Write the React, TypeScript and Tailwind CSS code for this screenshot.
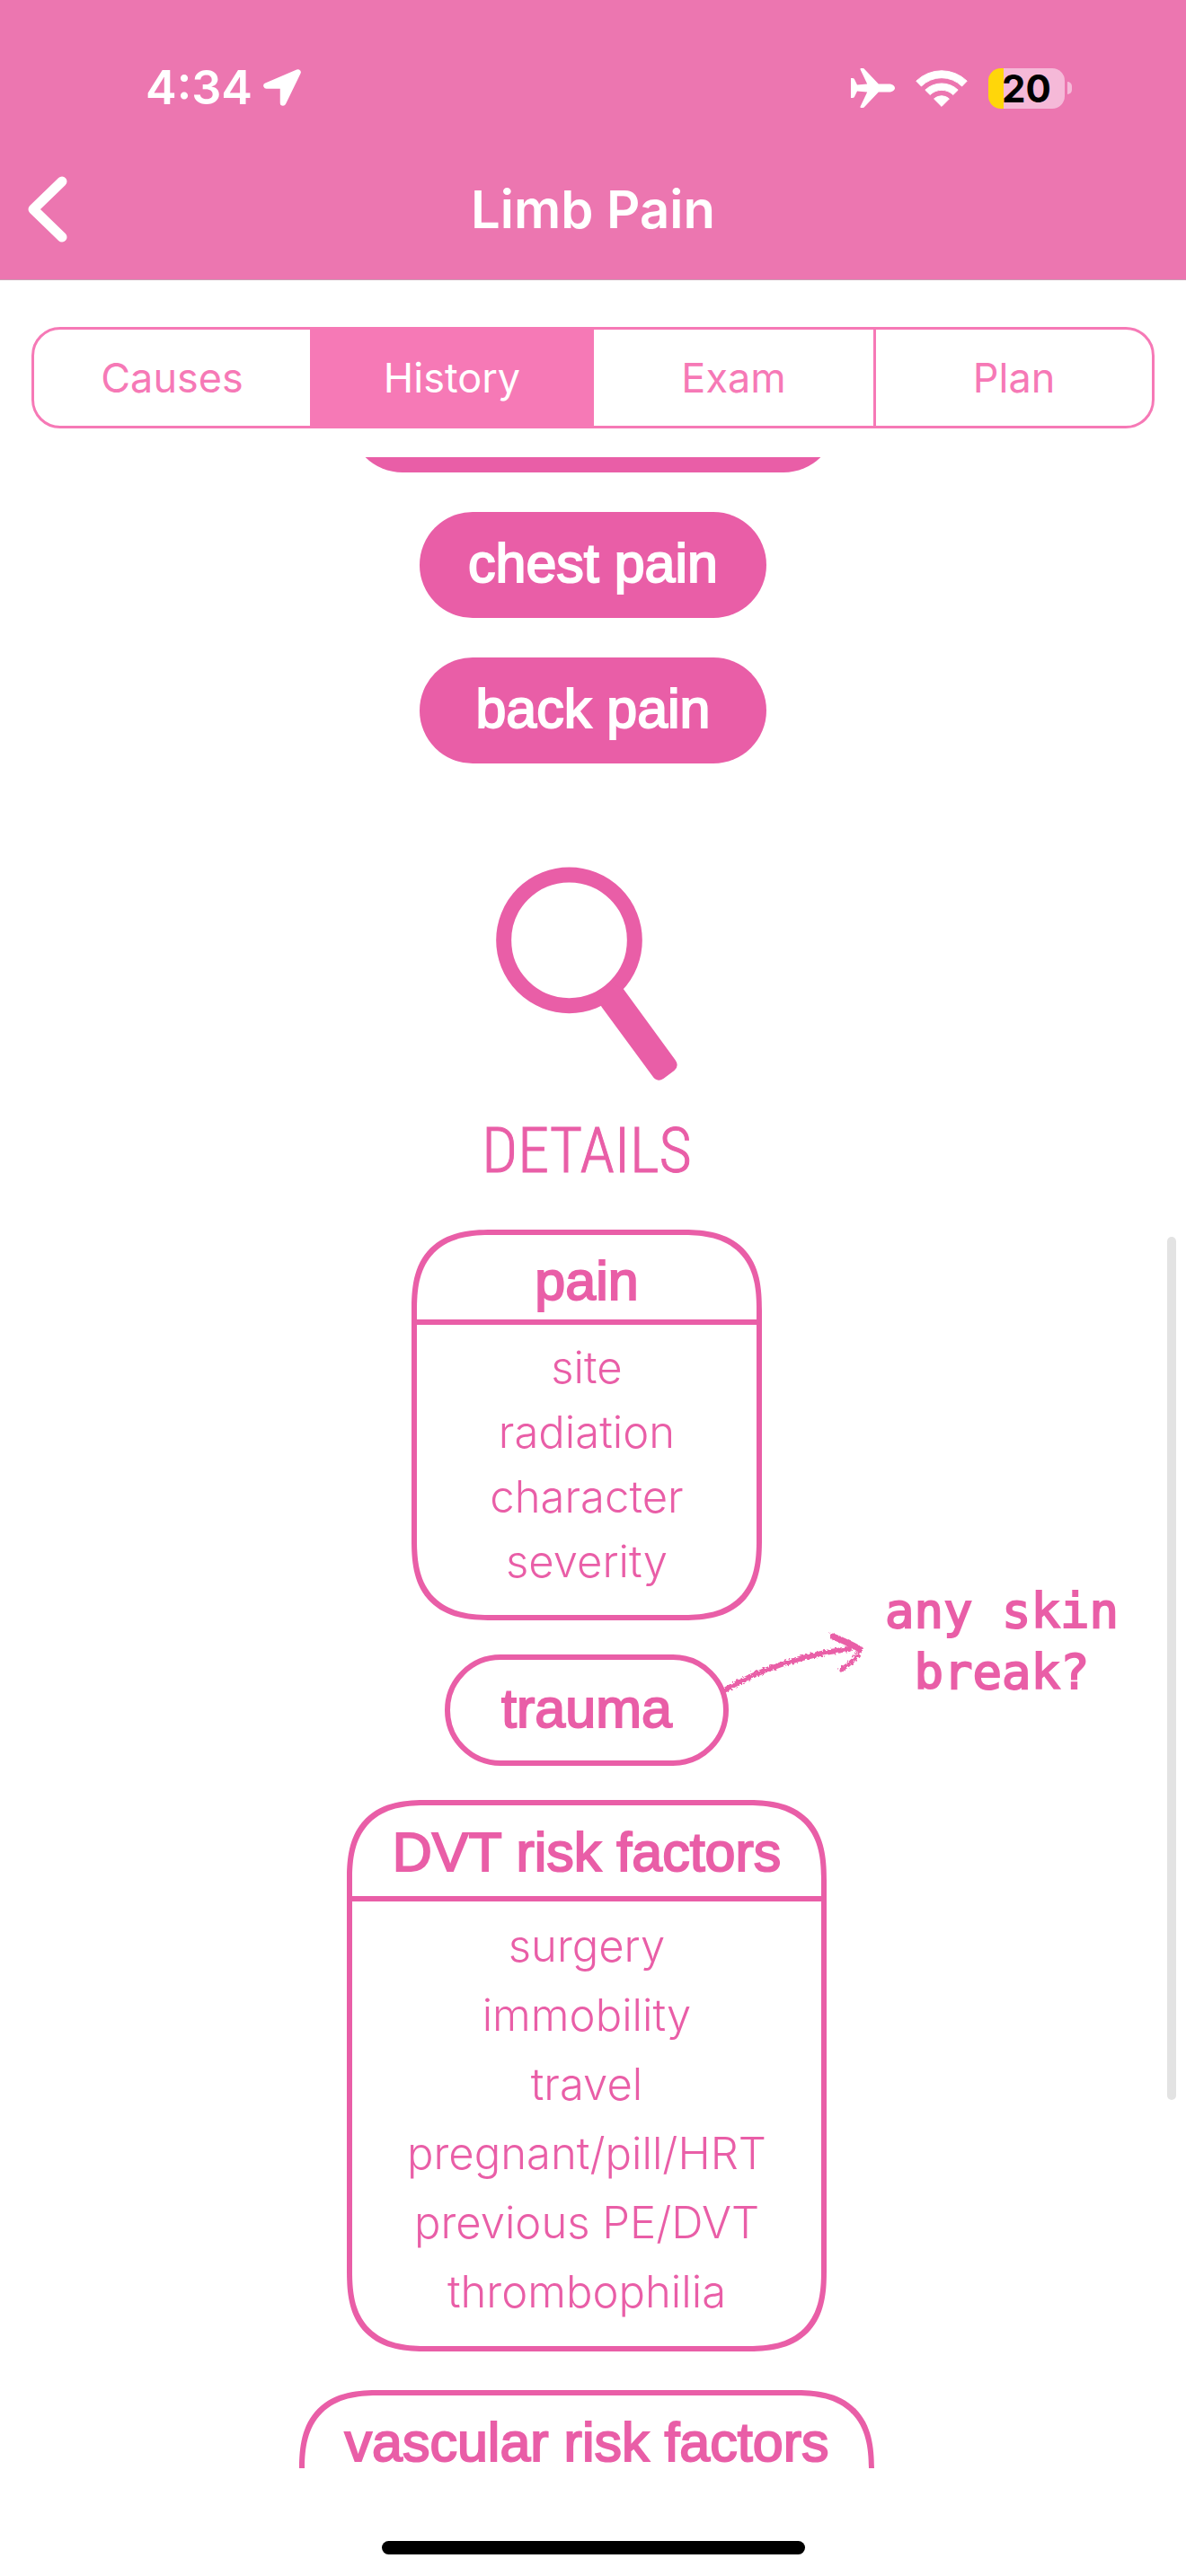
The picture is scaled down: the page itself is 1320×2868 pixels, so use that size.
import React, { useState } from "react";

const TABS = ["Causes", "History", "Exam", "Plan"];
const PAIN = ["site", "radiation", "character", "severity"];
const DVT = ["surgery", "immobility", "travel", "pregnant/pill/HRT", "previous PE/DVT", "thrombophilia"];

function LocationIcon() {
  return (
    <svg viewBox="0 0 42 42" className="h-[42px] w-[42px]" aria-hidden="true">
      <path d="M38.5 3.5 3.5 18.5H22v19z" fill="white" stroke="white" strokeWidth="6.5" strokeLinejoin="round" />
    </svg>
  );
}

function PlaneIcon() {
  return (
    <svg viewBox="0 0 49 44" className="h-11 w-[49px]" aria-hidden="true">
      <path
        fill="white"
        d="M10.5 1.2Q10.2 0 11.4 0H13.2Q14.6 0 15.4 1.2L30.8 17.4H42C46 17.4 49 19.4 49 22S46 26.6 42 26.6H30.8L15.4 42.8Q14.6 44 13.2 44H11.4Q10.2 44 10.5 42.8L18.2 26.6 7 25.6 4 31.8Q3.3 33 2 33H0V11H2Q3.3 11 4 12.2L7 18.4 18.2 17.4Z"
      />
    </svg>
  );
}

function WifiIcon() {
  return (
    <svg viewBox="0 0 58 42" className="h-[42px] w-[58px]" aria-hidden="true">
      <g fill="white" stroke="white" strokeWidth="1" strokeLinejoin="round">
        <path d="M.8 13.2A40.5 40.5 0 0 1 57.2 13.2L51.600 19A32 32 0 0 0 6.400 19Z" />
        <path d="M10.8 23.2A26.5 26.5 0 0 1 47.2 23.2L41.8 28.500A18.500 18.500 0 0 0 16.2 28.500Z" />
        <path d="M20.6 33A12.5 12.5 0 0 1 37.4 33L29 41.4Z" />
      </g>
    </svg>
  );
}

function Battery() {
  return (
    <div className="flex items-center gap-[3px]">
      <div className="flex h-[45px] w-[85px] items-center justify-center rounded-[14px] bg-linear-to-r from-[#ffd60a] from-20% to-[#f5b9d8] to-20%">
        <span className="text-[42px] leading-[45px] font-bold text-black">20</span>
      </div>
      <div className="h-[14px] w-[5px] rounded-r-full bg-[#f5b9d8]" />
    </div>
  );
}

function Pill({ children }: { children: React.ReactNode }) {
  return (
    <button type="button" className="h-[118px] w-[386px] shrink-0 rounded-full bg-[#e95ea7] pb-1 text-white">
      <span className="text-[61px] leading-[64px] [-webkit-text-stroke:2px_white]">{children}</span>
    </button>
  );
}

function CardTitle({ children }: { children: React.ReactNode }) {
  return (
    <h3 className="text-center text-[61px] leading-[56px] whitespace-nowrap [-webkit-text-stroke:2px_#e95ea7]">
      {children}
    </h3>
  );
}

function Magnifier() {
  return (
    <svg viewBox="0 0 606 714" className="h-[238px] w-[202px] shrink-0" fill="#e95ea7" aria-hidden="true">
      <circle cx="244.500" cy="245.500" r="218.500" fill="none" stroke="#e95ea7" strokeWidth="51" />
      <path d="M352 467 523 700Q538 722 560 707L595 681Q613 666 599 646L426 409 385 390 340 430Z" />
    </svg>
  );
}

function ChalkArrow() {
  return (
    <svg viewBox="0 0 160 72" className="h-[72px] w-40" fill="none" stroke="#e95ea7" strokeLinecap="round" aria-hidden="true">
      <defs>
        <filter id="chalk" x="-5%" y="-10%" width="110%" height="120%">
          <feTurbulence type="fractalNoise" baseFrequency="0.35" numOctaves="2" seed="4" />
          <feDisplacementMap in="SourceGraphic" scale="5" />
        </filter>
      </defs>
      <g filter="url(#chalk)">
        <path d="M1 66C38 44 88 26 140 20" strokeWidth="6" />
        <path d="M122 6C132 10 143 15 152 20" strokeWidth="7" />
        <path d="M153 20C149 29 141 37 131 43" strokeWidth="5" />
      </g>
    </svg>
  );
}

export default function App() {
  const [tab, setTab] = useState("History");
  return (
    <div className="relative flex h-screen flex-col overflow-hidden bg-white font-['Liberation_Sans',Arial,sans-serif] text-[#e95ea7]">
      <header className="shrink-0 border-b border-[#c9a0b4] bg-[#ec76b0] font-[Inter,sans-serif] text-white">
        <div className="flex h-[154px] items-end justify-between pr-[127px] pl-[162px]">
          <div className="flex h-[112px] items-center gap-3">
            <span className="text-[52px] leading-none font-semibold">4:34</span>
            <LocationIcon />
          </div>
          <div className="flex h-[112px] items-center gap-[23px]">
            <PlaneIcon />
            <WifiIcon />
            <Battery />
          </div>
        </div>
        <div className="grid h-[157px] grid-cols-[1fr_auto_1fr] items-center">
          <button type="button" aria-label="Back" className="ml-[30px] justify-self-start">
            <svg viewBox="0 0 46 76" className="h-[76px] w-[46px]" fill="none" stroke="white" strokeWidth="11" strokeLinecap="round" strokeLinejoin="round" aria-hidden="true">
              <path d="M39 7 7 38 39 69" />
            </svg>
          </button>
          <h1 className="text-[58px] leading-none font-semibold">Limb Pain</h1>
        </div>
      </header>

      <div
        role="tablist"
        className="mx-[35px] mt-13 grid h-[113px] shrink-0 grid-cols-[310fr_313fr_314fr_307fr] divide-x-3 divide-[#f679b6] overflow-hidden rounded-[32px] border-3 border-[#f679b6] font-[Inter,sans-serif]"
      >
        {TABS.map((t) => (
          <button
            key={t}
            type="button"
            role="tab"
            aria-selected={t === tab}
            onClick={() => setTab(t)}
            className={`text-[45px] leading-[60px] ${t === tab ? "bg-[#f679b6] text-white" : "text-[#f679b6]"}`}
          >
            {t}
          </button>
        ))}
      </div>

      <main className="mt-8 flex min-h-0 flex-1 flex-col items-center overflow-hidden">
        <div className="-mt-[101px] flex shrink-0 flex-col items-center gap-11">
          <div className="h-[118px] w-[542px] rounded-full bg-[#e95ea7]" />
          <Pill>chest pain</Pill>
          <Pill>back pain</Pill>
        </div>

        <section className="mt-[115px] flex shrink-0 flex-col items-center pr-[14px]">
          <Magnifier />
          <h2 className="mt-7 mb-[38px] font-['Roboto_Condensed',Roboto,sans-serif] text-[70px] leading-[100px] font-light [-webkit-text-stroke:1px_#e95ea7]">
            DETAILS
          </h2>

          <div className="w-[390px] rounded-[90px] border-6 border-[#e95ea7] [corner-shape:superellipse(1.4)]">
            <div className="border-b-6 border-[#e95ea7] pt-[23px] pb-[15px]">
              <CardTitle>pain</CardTitle>
            </div>
            <ul className="pt-3 pb-[23px] text-center font-[Inter,sans-serif] text-[49px] leading-[72px] font-light">
              {PAIN.map((i) => (
                <li key={i}>{i}</li>
              ))}
            </ul>
          </div>

          <div className="relative mt-[38px] flex h-[124px] w-[316px] items-center justify-center rounded-full border-6 border-[#e95ea7] pb-1">
            <CardTitle>trauma</CardTitle>
            <div className="absolute -top-8 left-full flex items-start">
              <ChalkArrow />
              <p className="-mt-14 ml-5 text-center font-['DejaVu_Sans_Mono',monospace] text-[54px] leading-[68px] whitespace-pre [-webkit-text-stroke:2px_#e95ea7]">
                {"any skin\nbreak?"}
              </p>
            </div>
          </div>

          <div className="mt-[38px] w-[534px] rounded-[90px] border-6 border-[#e95ea7] [corner-shape:superellipse(1.4)]">
            <div className="border-b-6 border-[#e95ea7] pt-6 pb-[21px]">
              <CardTitle>DVT risk factors</CardTitle>
            </div>
            <ul className="pt-[11px] pb-[22px] text-center font-[Inter,sans-serif] text-[49px] leading-[77px] font-light">
              {DVT.map((i) => (
                <li key={i}>{i}</li>
              ))}
            </ul>
          </div>

          <div className="mt-[43px] w-[640px] rounded-t-[90px] border-6 border-b-0 border-[#e95ea7] pt-6 pb-8 [corner-shape:superellipse(1.4)]">
            <CardTitle>vascular risk factors</CardTitle>
          </div>
        </section>
      </main>

      <footer className="flex h-[120px] shrink-0 items-end justify-center pb-6">
        <div className="h-[15px] w-[471px] rounded-full bg-black" />
      </footer>

      <div className="absolute top-[1377px] right-[11px] h-[961px] w-[10px] rounded-full bg-[#e3e3e3]" />
    </div>
  );
}
